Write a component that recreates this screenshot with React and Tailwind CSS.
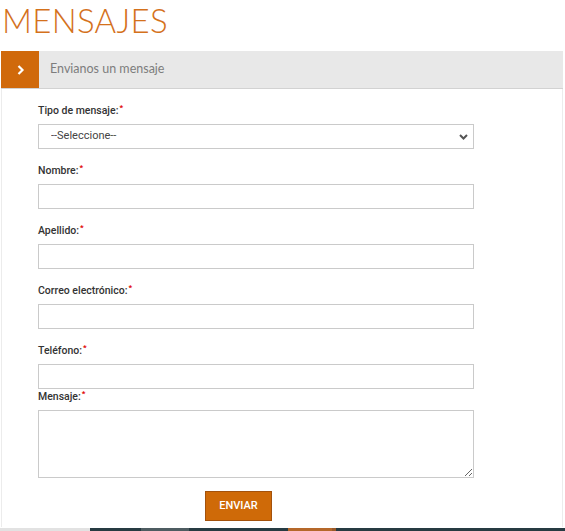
import React from 'react';

const labelCls = "block text-[10.5px] leading-[16px] font-medium text-[#333] font-['Roboto',sans-serif] mb-[5px]";
const inputCls = "block w-[436px] h-[25px] border border-[#cacaca] bg-white outline-none";

// etiqueta con asterisco rojo de requerido
const Label = ({ children, className = '' }) => (
  <label className={`${labelCls} ${className}`}>
    {children}
    <span className="relative -top-[4px] ml-[1px] text-[8px] leading-none text-[#e00000] font-bold">*</span>
  </label>
);

const Field = ({ label, last = false }) => (
  <div className={last ? 'mb-0' : 'mb-[14px]'}>
    <Label>{label}</Label>
    <input type="text" className={inputCls} />
  </div>
);

export default function App() {
  return (
    <div className="w-[565px] h-[531px] bg-white overflow-hidden flex flex-col">
      <h1 className="text-[33px] leading-[40px] font-light tracking-[0.3px] text-[#d4711c] font-['Lato',sans-serif] pl-[2px] mb-[11px]">
        MENSAJES
      </h1>

      <div className="ml-[1px] w-[562px] flex-1 flex flex-col">
        {/* barra del acordeón */}
        <div className="flex h-[38px] bg-[#e8e8e8] border-b border-[#d2d2d2]">
          <div className="w-[38px] bg-[#d0690b] flex items-center justify-center">
            <svg width="9" height="12" viewBox="0 0 9 12" fill="none">
              <path d="M2.5 2 L6.5 6 L2.5 10" stroke="white" strokeWidth="2.2" />
            </svg>
          </div>
          <span className="pl-[11px] flex items-center text-[12.5px] text-[#7d7d7d] font-['Lato',sans-serif]">
            Envianos un mensaje
          </span>
        </div>

        {/* formulario */}
        <div className="flex-1 border-x border-[#ececec] pl-[36px] pt-[14px]">
          <div className="mb-[14px]">
            <Label>Tipo de mensaje:</Label>
            <div className="relative w-[436px]">
              <select className="block w-[436px] h-[25px] appearance-none border border-[#cacaca] bg-white pl-[12px] text-[11px] text-[#444] font-['Roboto',sans-serif] outline-none">
                <option>--Seleccione--</option>
              </select>
              <svg className="absolute right-[6px] top-[10px]" width="9" height="6" viewBox="0 0 9 6" fill="none">
                <path d="M1 1 L4.5 4.5 L8 1" stroke="#555" strokeWidth="2" />
              </svg>
            </div>
          </div>

          <Field label="Nombre:" />
          <Field label="Apellido:" />
          <Field label="Correo electrónico:" />
          <Field label="Teléfono:" last />

          <div>
            <Label>Mensaje:</Label>
            <textarea className="block w-[436px] h-[68px] border border-[#cacaca] bg-white outline-none" />
          </div>

          <button className="mt-[13px] ml-[167px] w-[67px] h-[30px] bg-[#cf6a08] border border-[#a3520c] text-white text-[11px] font-['Roboto',sans-serif] font-medium">
            ENVIAR
          </button>
        </div>
      </div>

      {/* franja inferior */}
      <div className="flex h-[3px] mt-[1px]">
        <div className="w-[90px] bg-[#e2e2e2]" />
        <div className="w-[51px] bg-[#263b42]" />
        <div className="w-[48px] bg-[#4e5c61]" />
        <div className="w-[99px] bg-[#263b42]" />
        <div className="w-[44px] bg-[#b5682a]" />
        <div className="w-[4px] bg-[#9a5a2a]" />
        <div className="flex-1 bg-[#263b42]" />
      </div>
    </div>
  );
}
